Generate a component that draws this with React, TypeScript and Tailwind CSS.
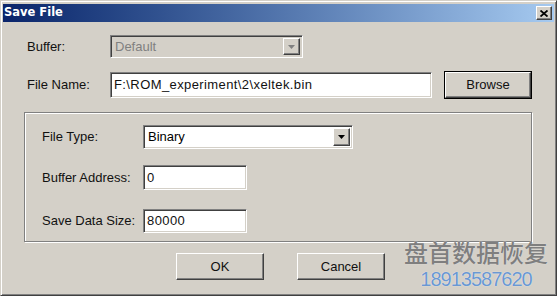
import { ReactNode } from "react";

const sunken =
  "border border-t-[#808080] border-l-[#808080] border-b-white border-r-white shadow-[inset_1px_1px_0_#404040,inset_-1px_-1px_0_#d4d0c8]";
const raised =
  "border border-t-white border-l-white border-b-[#404040] border-r-[#404040] shadow-[inset_-1px_-1px_0_#808080]";

function DropButton({ disabled }: { disabled?: boolean }) {
  return (
    <div className={`w-[17px] h-full bg-[#d4d0c8] flex items-center justify-center ${raised}`}>
      <svg width="7" height="4" viewBox="0 0 7 4">
        <path d="M0 0h7L3.5 4z" fill={disabled ? "#808080" : "#000"} />
      </svg>
    </div>
  );
}

function Combo({ value, width, height, disabled }: { value: string; width: string; height: string; disabled?: boolean }) {
  return (
    <div className={`${width} ${height} ${sunken} p-[2px] flex ${disabled ? "bg-[#d4d0c8]" : "bg-white"}`}>
      <div className={`flex-1 flex items-center pl-[2px] ${disabled ? "text-[#808080]" : "text-black"}`}>{value}</div>
      <DropButton disabled={disabled} />
    </div>
  );
}

function Field({ value, width, height }: { value: string; width: string; height: string }) {
  return (
    <div className={`${width} ${height} ${sunken} bg-white flex items-center pl-[3px] tracking-[0.4px]`}>{value}</div>
  );
}

function Button({ children, def, className }: { children: ReactNode; def?: boolean; className?: string }) {
  return (
    <div className={`${className} ${def ? "border border-black" : ""} bg-[#d4d0c8]`}>
      <div className={`w-full h-full ${raised} flex items-center justify-center`}>{children}</div>
    </div>
  );
}

export default function App() {
  return (
    <div
      className="relative w-[557px] h-[296px] bg-[#d4d0c8] border border-t-[#d4d0c8] border-l-[#d4d0c8] border-b-[#404040] border-r-[#404040] shadow-[inset_1px_1px_0_#fff,inset_-1px_-1px_0_#808080] p-[2px] text-[13px] tracking-[0px] text-[#111] overflow-hidden"
      style={{ fontFamily: '"Liberation Sans", Arial, sans-serif' }}
    >
      <div className="mt-[1px] h-[18px] bg-gradient-to-r from-[#0a246a] to-[#a6caf0] flex items-center justify-between pl-[1px] pr-[2px]">
        <span className="text-white font-bold text-[11.5px]" style={{ fontFamily: '"DejaVu Sans", sans-serif' }}>
          Save File
        </span>
        <div className={`w-[16px] h-[14px] bg-[#d4d0c8] ${raised} flex items-center justify-center`}>
          <svg width="8" height="7" viewBox="0 0 8 7">
            <path d="M0.5 0.5L7.5 6.5M7.5 0.5L0.5 6.5" stroke="#000" strokeWidth="1.8" />
          </svg>
        </div>
      </div>

      <div className="pl-[23px]">
        <div className="flex items-center mt-[13px]">
          <div className="w-[84px] pl-[1px]">Buffer:</div>
          <Combo value="Default" width="w-[193px]" height="h-[23px]" disabled />
        </div>

        <div className="flex items-center mt-[13px]">
          <div className="w-[84px] pl-[1px]">File Name:</div>
          <Field value={"F:\\ROM_experiment\\2\\xeltek.bin"} width="w-[322px]" height="h-[26px]" />
          <Button def className="w-[88px] h-[28px] ml-[12px]">Browse</Button>
        </div>

        <div className="mt-[13px] ml-[-2px] w-[508px] h-[130px] border border-[#808080] shadow-[inset_1px_1px_0_#fff,1px_1px_0_#fff] pl-[17px] pt-[12px]">
          <div className="flex items-center">
            <div className="w-[101px]">File Type:</div>
            <Combo value="Binary" width="w-[210px]" height="h-[24px]" />
          </div>
          <div className="flex items-center mt-[16px]">
            <div className="w-[101px]">Buffer Address:</div>
            <Field value="0" width="w-[104px]" height="h-[25px]" />
          </div>
          <div className="flex items-center mt-[19px]">
            <div className="w-[101px]">Save Data Size:</div>
            <Field value="80000" width="w-[104px]" height="h-[24px]" />
          </div>
        </div>

        <div className="flex mt-[11px] pl-[150px] gap-[33px]">
          <Button className="w-[88px] h-[27px]">OK</Button>
          <Button className="w-[88px] h-[27px]">Cancel</Button>
        </div>
      </div>

      <div className="absolute right-[8px] bottom-[6px] flex flex-col items-center leading-none">
        <span
          className="text-[24px] font-medium text-[#7f7f7f] [text-shadow:0_0_1px_#eee]"
          style={{ fontFamily: '"Noto Sans CJK SC", sans-serif' }}
        >
          盘首数据恢复
        </span>
        <span className="text-[20px] tracking-[-1px] text-[#6a98d2] mt-[5px] [text-shadow:0_0_1px_#fff]">18913587620</span>
      </div>
    </div>
  );
}
